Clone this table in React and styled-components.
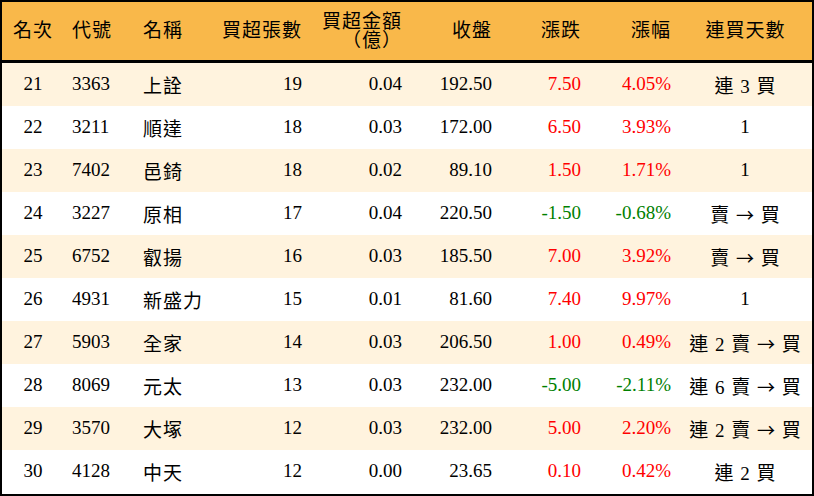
import React from "react";
import styled, { createGlobalStyle } from "styled-components";

const Global = createGlobalStyle`
  html, body { margin: 0; padding: 0; background: #ffffff; }
  body { width: 814px; height: 496px; overflow: hidden; }
`;

const FONT = `"Liberation Serif", "BiauKai", "DFKai-SB", "AR PL UKai TW", "Noto Sans CJK TC", serif`;

const Frame = styled.div`
  width: 814px;
  height: 496px;
  box-sizing: border-box;
  border: 2px solid #000;
  overflow: hidden;
  background: #fff;
`;

const Table = styled.table`
  width: 810px;
  border-collapse: collapse;
  border-spacing: 0;
  table-layout: fixed;
  font-family: ${FONT};
  font-size: 19px;
  color: #000;
`;

const HeadRow = styled.tr`
  background: #f9b84a;
  height: 59px;
`;

const Th = styled.th`
  font-weight: 400;
  padding: 0 8px;
  height: 59px;
  box-sizing: border-box;
  border-bottom: 3px solid #000;
  text-align: ${(p) => p.$align || "left"};
  letter-spacing: 1px;
  line-height: 19px;
  white-space: nowrap;
  vertical-align: middle;
`;

const Row = styled.tr`
  height: 43px;
  background: ${(p) => (p.$shade ? "#fff3de" : "#ffffff")};
`;

const Td = styled.td`
  padding: 0 8px;
  height: 43px;
  text-align: ${(p) => p.$align || "left"};
  color: ${(p) => p.$color || "#000"};
  white-space: nowrap;
  vertical-align: middle;
  letter-spacing: ${(p) => (p.$cjk ? "1px" : "0")};
`;

const Arrow = styled.span`
  font-family: "Noto Sans CJK TC", sans-serif;
  font-size: 18px;
`;

const cols = [
  { w: 62, align: "center" },
  { w: 71, align: "left" },
  { w: 78, align: "left" },
  { w: 97, align: "right" },
  { w: 100, align: "right" },
  { w: 90, align: "right" },
  { w: 89, align: "right" },
  { w: 90, align: "right" },
  { w: 133, align: "center" },
];

const headers = ["名次", "代號", "名稱", "買超張數", "買超金額\n（億）", "收盤", "漲跌", "漲幅", "連買天數"];

const rows = [
  ["21", "3363", "上詮", "19", "0.04", "192.50", "7.50", "4.05%", "連 3 買"],
  ["22", "3211", "順達", "18", "0.03", "172.00", "6.50", "3.93%", "1"],
  ["23", "7402", "邑錡", "18", "0.02", "89.10", "1.50", "1.71%", "1"],
  ["24", "3227", "原相", "17", "0.04", "220.50", "-1.50", "-0.68%", "賣 → 買"],
  ["25", "6752", "叡揚", "16", "0.03", "185.50", "7.00", "3.92%", "賣 → 買"],
  ["26", "4931", "新盛力", "15", "0.01", "81.60", "7.40", "9.97%", "1"],
  ["27", "5903", "全家", "14", "0.03", "206.50", "1.00", "0.49%", "連 2 賣 → 買"],
  ["28", "8069", "元太", "13", "0.03", "232.00", "-5.00", "-2.11%", "連 6 賣 → 買"],
  ["29", "3570", "大塚", "12", "0.03", "232.00", "5.00", "2.20%", "連 2 賣 → 買"],
  ["30", "4128", "中天", "12", "0.00", "23.65", "0.10", "0.42%", "連 2 買"],
];

const RED = "#ff0000";
const GREEN = "#008000";

function renderStreak(text) {
  const parts = text.split("→");
  if (parts.length === 1) return text;
  return (
    <>
      {parts[0]}
      <Arrow>→</Arrow>
      {parts[1]}
    </>
  );
}

export default function App() {
  return (
    <>
      <Global />
      <Frame>
        <Table>
          <colgroup>
            {cols.map((c, i) => (
              <col key={i} style={{ width: c.w }} />
            ))}
          </colgroup>
          <thead>
            <HeadRow>
              {headers.map((h, i) => (
                <Th key={i} $align={cols[i].align}>
                  {h.split("\n").map((line, j) => (
                    <div key={j}>{line}</div>
                  ))}
                </Th>
              ))}
            </HeadRow>
          </thead>
          <tbody>
            {rows.map((r, ri) => {
              const neg = r[6].startsWith("-");
              const color = neg ? GREEN : RED;
              return (
                <Row key={ri} $shade={ri % 2 === 0}>
                  {r.map((v, ci) => (
                    <Td
                      key={ci}
                      $align={cols[ci].align}
                      $color={ci === 6 || ci === 7 ? color : undefined}
                      $cjk={ci === 2 || ci === 8}
                    >
                      {ci === 8 ? renderStreak(v) : v}
                    </Td>
                  ))}
                </Row>
              );
            })}
          </tbody>
        </Table>
      </Frame>
    </>
  );
}
